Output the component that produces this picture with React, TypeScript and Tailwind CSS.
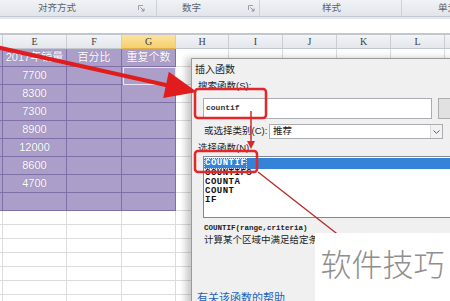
import React from "react";

const widths = [3, 64, 55, 54, 53, 54, 54, 54, 54, 20];
const letters = ["", "E", "F", "G", "H", "I", "J", "K", "L", ""];

const purpleRows = [
  ["2017年销量", "百分比", "重复个数"],
  ["7700", "", ""],
  ["8300", "", ""],
  ["7300", "", ""],
  ["8900", "", ""],
  ["12000", "", ""],
  ["8600", "", ""],
  ["4700", "", ""],
  ["", "", ""],
];

function Launcher() {
  return (
    <svg width="7" height="7" viewBox="0 0 7 7" className="shrink-0">
      <path d="M0.5 5V0.5H5" stroke="#9aa0a8" fill="none" />
      <path d="M2.5 2.5L6 6M6 3.5V6H3.5" stroke="#8a9098" fill="none" />
    </svg>
  );
}

function RibbonStrip() {
  return (
    <div className="flex h-[17px] whitespace-nowrap bg-linear-to-b from-[#f1f3f6] to-[#e1e5ea] border-b border-[#c3c9d1] text-[9.5px] text-[#5f6368]">
      <div className="flex w-[157px] shrink-0 items-center border-r border-[#cdd2d9]">
        <span className="ml-[38px]">对齐方式</span>
        <span className="ml-auto mr-[11px]"><Launcher /></span>
      </div>
      <div className="flex w-[103px] shrink-0 items-center border-r border-[#cdd2d9]">
        <span className="ml-[25px]">数字</span>
        <span className="ml-auto mr-[4px]"><Launcher /></span>
      </div>
      <div className="flex w-[142px] shrink-0 items-center border-r border-[#cdd2d9]">
        <span className="ml-[62px]">样式</span>
      </div>
      <div className="flex w-[60px] shrink-0 items-center">
        <span className="ml-[36px]">单元</span>
      </div>
    </div>
  );
}

function HeaderRow() {
  return (
    <div className="flex h-[16px] border-t-2 border-[#c2c7ce] bg-linear-to-b from-[#f2f4f7] to-[#e2e6ea]">
      {widths.map((w, i) => (
        <div
          key={i}
          style={{ width: w }}
          className={`flex shrink-0 items-center justify-center border-r border-[#c9ced4] border-b font-['Liberation_Serif',serif] text-[10px] text-[#3d3d3d] ${
            i === 3 ? "bg-linear-to-b from-[#fbe3a0] to-[#f6cf6c] border-b-[#e0b04a]" : "border-b-[#c3c8cf]"
          }`}
        >
          {letters[i]}
        </div>
      ))}
    </div>
  );
}

function SheetRow({ cells, purple, h }: { cells: string[]; purple: boolean; h: number }) {
  return (
    <div className="flex" style={{ height: h }}>
      {widths.map((w, i) => {
        const inPurple = purple && i <= 3;
        const text = i >= 1 && i <= 3 ? cells[i - 1] : "";
        return (
          <div
            key={i}
            style={{ width: w }}
            className={`flex shrink-0 items-center justify-center border-r border-b text-[11px] text-white [text-shadow:0_0_1px_rgba(60,40,90,0.35)] ${
              inPurple ? "bg-[#ab9ec9] border-[#7f6fa8]" : "bg-white border-[#dcdcdc]"
            }`}
          >
            {text}
          </div>
        );
      })}
    </div>
  );
}

function Dialog() {
  return (
    <div className="absolute left-[191px] top-[58px] flex h-[250px] w-[266px] flex-col border-l border-t border-[#9a9a9a] bg-[#f0f0f0] text-[9.5px] text-[#222] shadow-[-5px_0_7px_rgba(0,0,0,0.22)]">
      <div className="flex h-[20px] items-center pl-[3px] text-[10px]">插入函数</div>
      <div className="flex h-[14px] items-center pl-[6px]">搜索函数(S):</div>
      <div className="mt-[5px] flex h-[21px]">
        <div className="ml-[11px] flex w-[238px] items-start border border-[#abadb3] bg-white pl-[2px] pt-[3px] font-['Liberation_Mono',monospace] text-[8px] font-bold text-[#333]">
          countif
        </div>
        <div className="ml-[6px] w-[20px] border border-[#adadad] bg-[#e1e1e1]" />
      </div>
      <div className="mt-[5px] flex h-[15px] items-center">
        <span className="ml-[12px] w-[65px] whitespace-nowrap">或选择类别(C):</span>
        <div className="flex h-full w-[174px] items-center border border-[#abadb3] bg-white pl-[3px]">
          <span>推荐</span>
          <div className="ml-auto flex h-full w-[12px] items-center justify-center border-l border-[#dcdcdc] bg-[#f2f2f2]">
            <svg width="7" height="4" viewBox="0 0 7 4">
              <path d="M0.5 0.5L3.5 3.3L6.5 0.5" stroke="#606060" fill="none" />
            </svg>
          </div>
        </div>
      </div>
      <div className="mt-[2px] flex h-[14px] items-center pl-[6px]">选择函数(N):</div>
      <div className="ml-[11px] mt-[1px] h-[62px] border border-[#828790] bg-white pt-[1px] font-['Liberation_Mono',monospace] text-[9px] font-semibold tracking-[0.5px]">
        <div className="flex h-[11px] items-center bg-[#3384d8] pl-[1px] text-white">
          <span className="leading-[9px] outline-1 outline-dotted outline-[#cfe2f7]">COUNTIF</span>
        </div>
        {["COUNTIFS", "COUNTA", "COUNT", "IF"].map((f) => (
          <div key={f} className="h-[9px] pl-[1px] leading-[9px] text-[#111]">
            {f}
          </div>
        ))}
      </div>
      <div className="mt-[6px] h-[9px] pl-[12px] font-['Liberation_Mono',monospace] text-[7.5px] font-bold leading-[9px]">
        COUNTIF(range,criteria)
      </div>
      <div className="h-[14px] whitespace-nowrap pl-[12px] leading-[14px]">计算某个区域中满足给定条件的单元格数目</div>
      <div className="mt-auto h-[17px] pl-[5px] text-[11px] leading-[14px] text-[#1f5fbf]">有关该函数的帮助</div>
    </div>
  );
}

function Overlay() {
  return (
    <svg className="pointer-events-none absolute left-0 top-0" width="450" height="301" viewBox="0 0 450 301">
      <path d="M-4 47L168 85.5" stroke="#e11c1c" strokeWidth="4" />
      <polygon points="197,92 168.8,71.8 163.2,98" fill="#e11c1c" />
      <rect x="195" y="89" width="71" height="29" rx="3" fill="none" stroke="#e3262a" strokeWidth="2.5" />
      <path d="M251 111V142" stroke="#d62a2a" strokeWidth="1.5" />
      <polygon points="247,141 255,141 251,149" fill="#d62a2a" />
      <rect x="195" y="151" width="62" height="21" rx="3" fill="none" stroke="#e3262a" strokeWidth="2.5" />
      <path d="M258 172L345 240" stroke="#b3302c" strokeWidth="1.4" />
    </svg>
  );
}

export default function App() {
  return (
    <div className="relative h-[301px] w-[450px] overflow-hidden bg-white font-['Liberation_Sans','Noto_Sans_CJK_SC',sans-serif]">
      <RibbonStrip />
      <div className="h-[2px] bg-[#e4e7eb]" />
      <div className="h-[14px] bg-white" />
      <HeaderRow />
      {purpleRows.map((r, i) => (
        <SheetRow key={i} cells={r} purple h={18} />
      ))}
      {Array.from({ length: 7 }).map((_, i) => (
        <SheetRow key={"w" + i} cells={["", "", ""]} purple={false} h={14} />
      ))}
      <div className="pointer-events-none absolute left-[123px] top-[67px] h-[18px] w-[53px] border border-[#e9e4f2]" />
      <Dialog />
      <Overlay />
      <div className="absolute left-[315px] top-[233px] flex h-[68px] w-[135px] items-center justify-center bg-white pb-[8px] font-['Noto_Sans_CJK_SC',sans-serif] text-[31px] font-light text-[#8e8e8e]">
        软件技巧
      </div>
    </div>
  );
}
